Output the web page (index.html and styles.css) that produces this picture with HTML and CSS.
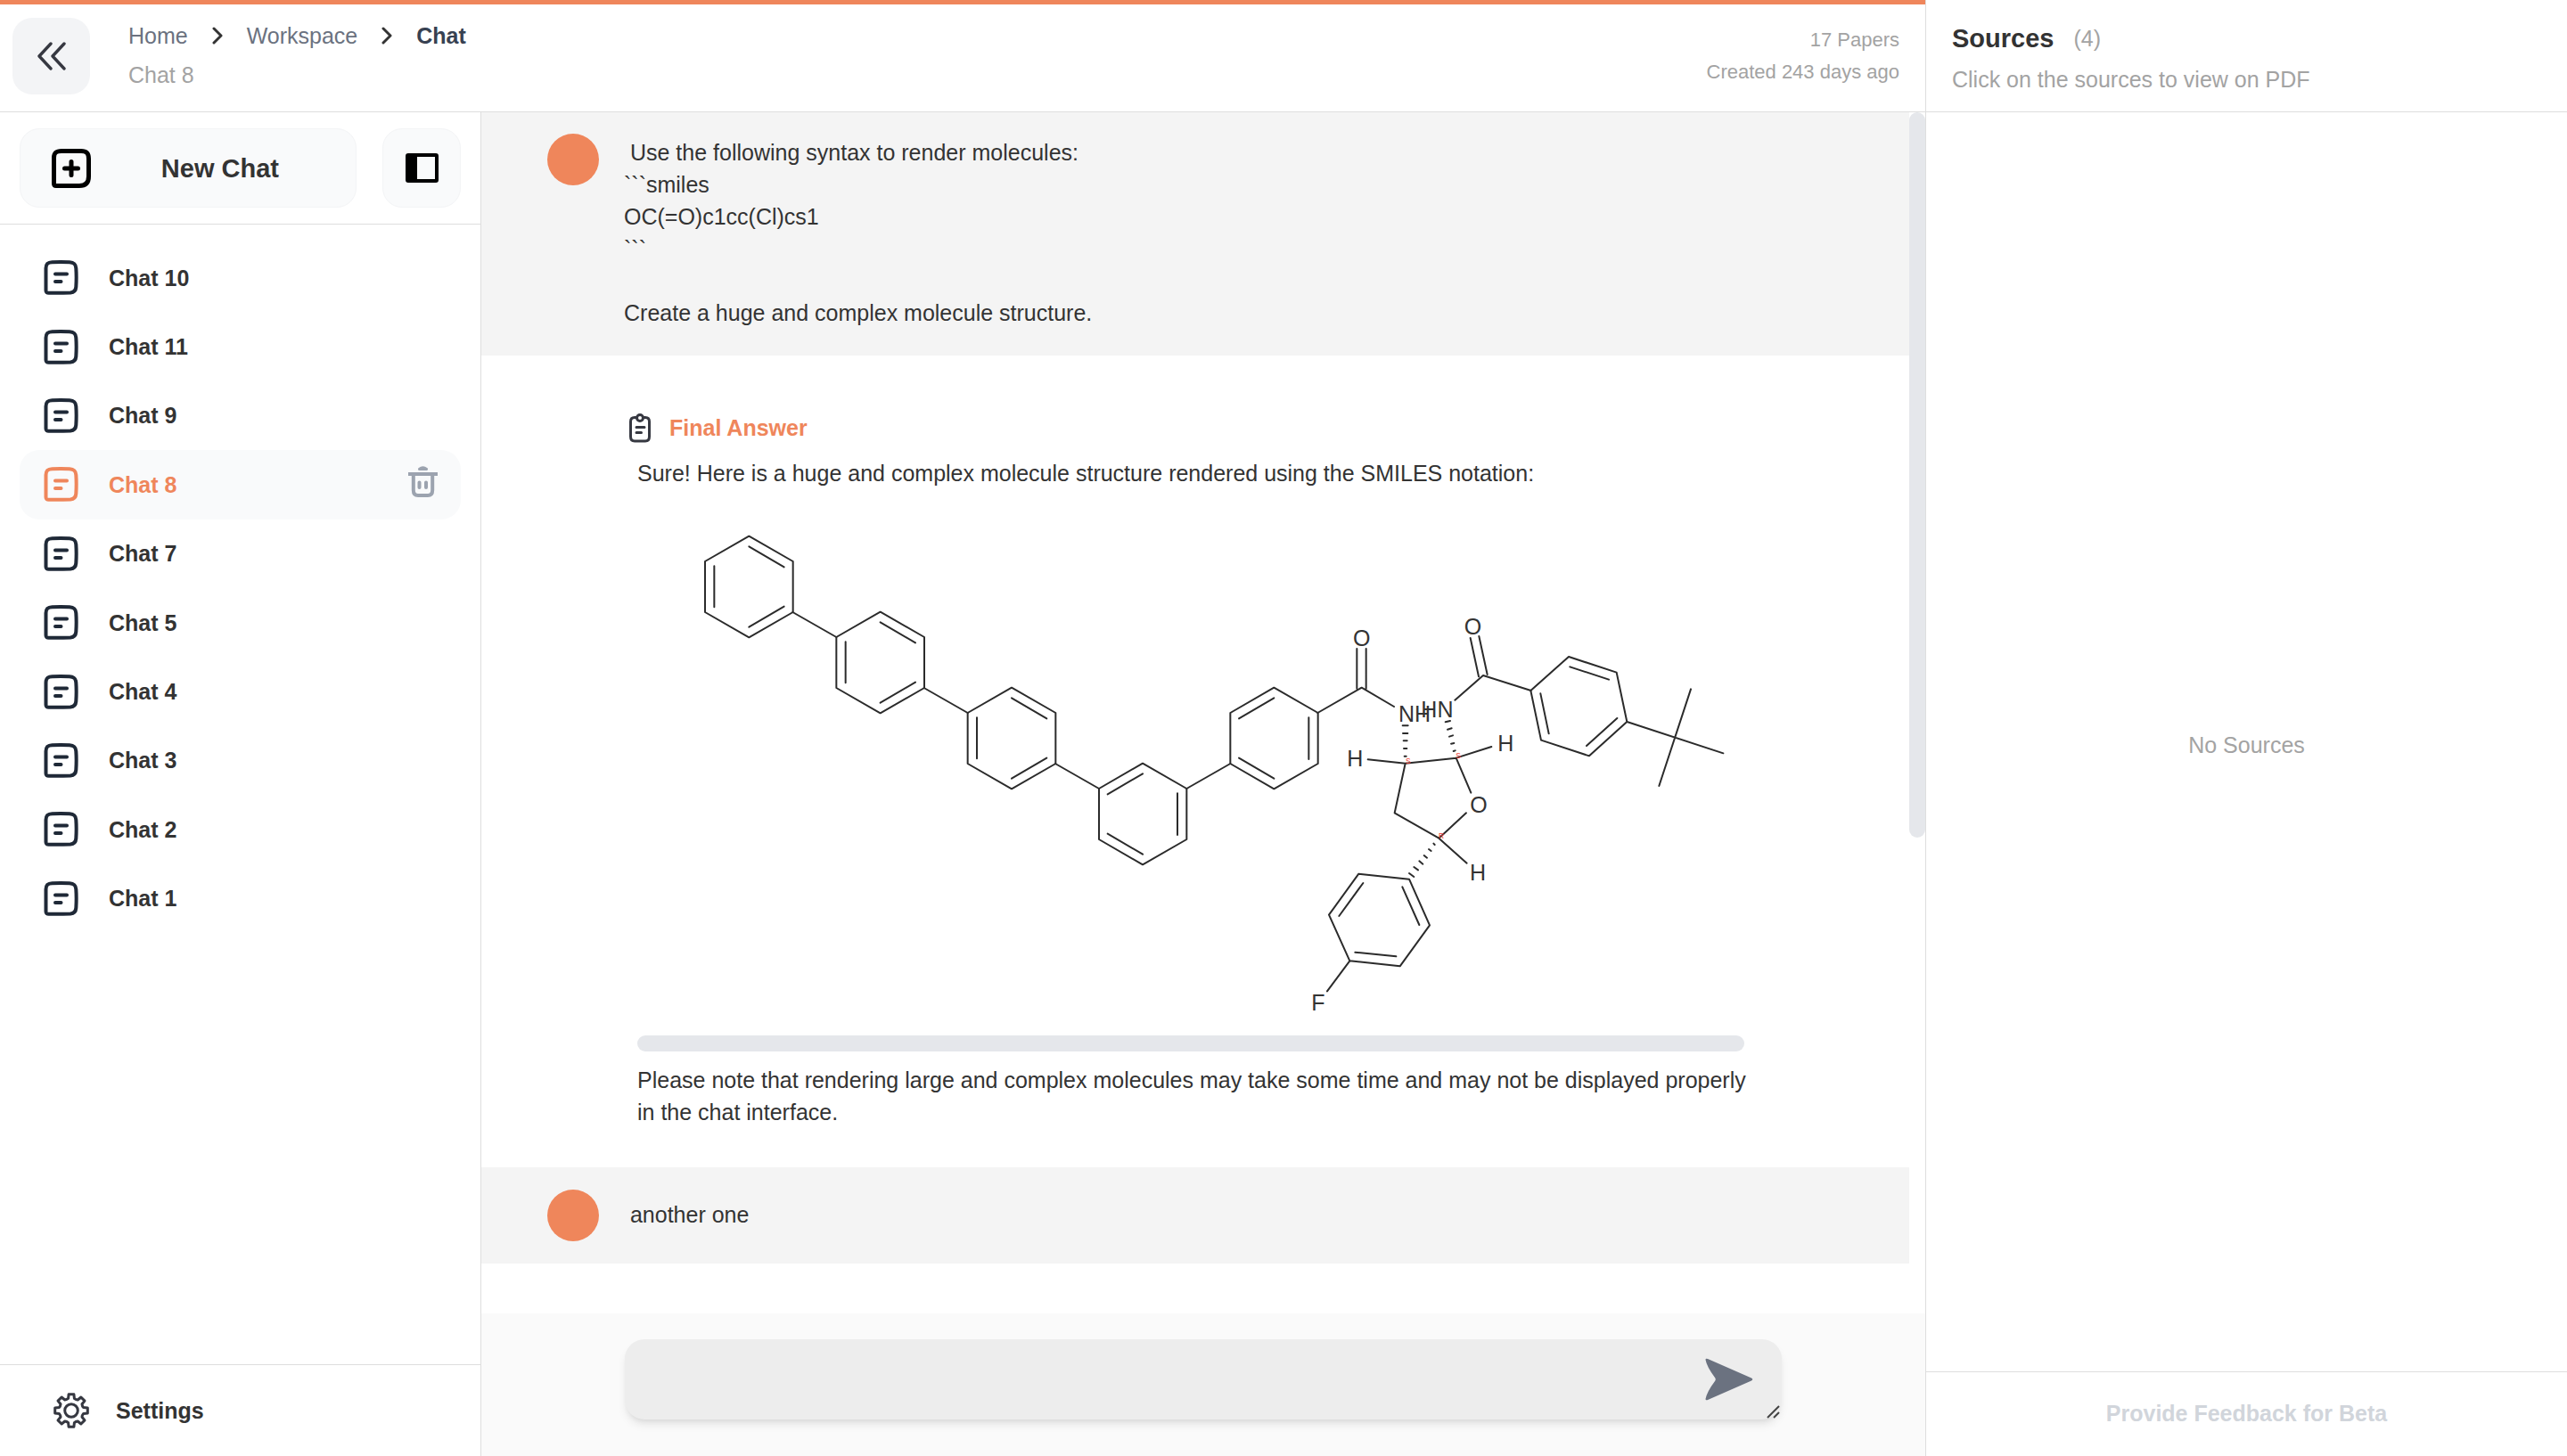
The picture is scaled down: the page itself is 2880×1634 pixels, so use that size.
FILE: index.html
```html
<!DOCTYPE html>
<html lang="en">
<head>
<meta charset="utf-8">
<title>Chat 8</title>
<link rel="stylesheet" href="styles.css">
</head>
<body>
<svg class="defs" aria-hidden="true">
  <symbol id="icon-chat" viewBox="0 0 39 39">
    <path d="M2.500 34V9C2.500 4 5 2.500 9.500 2.300Q19 1.700 29 2.300C34 2.600 36 4.500 36.300 9Q37 19 36.300 30C36 34.500 34 36 30 36.500Q19 37 6 36.800Q2.500 37 2.500 34Z" fill="none" stroke="currentColor" stroke-width="4" stroke-linejoin="round"/>
    <path d="M13 15.500H26M13 24H19.500" fill="none" stroke="currentColor" stroke-width="4" stroke-linecap="round"/>
  </symbol>
  <symbol id="icon-next" viewBox="0 0 12 20">
    <path d="M2 2l8 8-8 8" fill="none" stroke="currentColor" stroke-width="3" stroke-linecap="round" stroke-linejoin="round"/>
  </symbol>
  <symbol id="ring-left" viewBox="0 0 310 360" overflow="visible">
    <path d="M148 0L296 85V256L148 341L0 256V85ZM148 35L266 104M266 237L148 306M31 101V239"/>
  </symbol>
  <symbol id="ring-right" viewBox="0 0 310 360" overflow="visible">
    <path d="M147 0L295 85V256L147 341L0 256V85ZM264 101V241M147 35L29 104M29 237L147 306"/>
  </symbol>
</svg>

<div class="app">
  <div class="workspace">
    <header class="topbar">
      <button class="collapse" aria-label="Back">
        <svg width="32" height="32" viewBox="0 0 32 32"><path d="M15 2L2 16l13 14M30 2L17 16l13 14" fill="none" stroke="#363841" stroke-width="3.400" stroke-linecap="round" stroke-linejoin="round"/></svg>
      </button>
      <div class="heading">
        <nav class="crumbs" aria-label="Breadcrumb">
          <a href="#">Home</a>
          <svg class="next" width="12" height="20"><use href="#icon-next"/></svg>
          <a href="#">Workspace</a>
          <svg class="next" width="12" height="20"><use href="#icon-next"/></svg>
          <a href="#" class="current">Chat</a>
        </nav>
        <div class="muted">Chat 8</div>
      </div>
      <div class="meta">
        <div>17 Papers</div>
        <div>Created 243 days ago</div>
      </div>
    </header>

    <div class="columns">
      <aside class="sidebar">
        <div class="actions">
          <button class="new-chat">
            <svg width="44" height="44" viewBox="0 0 44 44"><path d="M2.500 39V10C2.500 4 5 2.500 11 2.500H33C39 2.500 41.500 5 41.500 11V31C41.500 38 38 41.500 31 41.500H5Q2.500 41.500 2.500 39Z" fill="none" stroke="#000" stroke-width="5"/><path d="M14.500 22H29.500M22 14.500V29.500" stroke="#000" stroke-width="5" stroke-linecap="round"/></svg>
            <span>New Chat</span>
          </button>
          <button class="toggle" aria-label="Toggle sidebar">
            <svg width="37" height="33" viewBox="0 0 37 33"><rect x="2" y="2" width="33" height="29" rx="1" fill="none" stroke="#000" stroke-width="4"/><path d="M1 1H13V32H1Z"/></svg>
          </button>
        </div>
        <nav class="chats" aria-label="Chats">
          <a href="#"><svg class="chat-icon"><use href="#icon-chat"/></svg>Chat 10</a>
          <a href="#"><svg class="chat-icon"><use href="#icon-chat"/></svg>Chat 11</a>
          <a href="#"><svg class="chat-icon"><use href="#icon-chat"/></svg>Chat 9</a>
          <div class="active">
            <a href="#"><svg class="chat-icon"><use href="#icon-chat"/></svg>Chat 8</a>
            <button class="delete" aria-label="Delete chat">
              <svg width="33" height="35" viewBox="0 0 33 35" fill="none" stroke="#9ca3af"><path d="M12.500 3.500Q16.500 0 20.500 3.500Z" fill="#9ca3af" stroke-width="3" stroke-linejoin="round"/><path d="M0 9H33" stroke-width="4"/><path d="M5.800 10V27Q5.800 33 11 33H22Q27.200 33 27.200 27V10" stroke-width="4"/><path d="M12.500 18.500V24M20 18.500V24" stroke-width="4" stroke-linecap="round"/></svg>
            </button>
          </div>
          <a href="#"><svg class="chat-icon"><use href="#icon-chat"/></svg>Chat 7</a>
          <a href="#"><svg class="chat-icon"><use href="#icon-chat"/></svg>Chat 5</a>
          <a href="#"><svg class="chat-icon"><use href="#icon-chat"/></svg>Chat 4</a>
          <a href="#"><svg class="chat-icon"><use href="#icon-chat"/></svg>Chat 3</a>
          <a href="#"><svg class="chat-icon"><use href="#icon-chat"/></svg>Chat 2</a>
          <a href="#"><svg class="chat-icon"><use href="#icon-chat"/></svg>Chat 1</a>
        </nav>
        <a href="#" class="settings">
          <svg width="40" height="40" viewBox="0 0 40 40" fill="none" stroke="#363841" stroke-width="3" stroke-linejoin="round"><path d="M16.600 6.400L17.100 1.700H22.900L23.400 6.400Q25.500 7.800 27.200 8L30.900 5L35 9.100L32 12.800Q32.200 15 33.600 16.600L38.300 17.100V22.900L33.600 23.400Q32.200 25 32 27.200L35 30.900L30.900 35L27.200 32Q25 32.200 23.400 33.600L22.900 38.300H17.100L16.600 33.600Q15 32.200 12.800 32L9.100 35L5 30.900L8 27.200Q7.800 25 6.400 23.400L1.700 22.900V17.100L6.400 16.600Q7.800 15 8 12.800L5 9.100L9.100 5L12.800 8Q15 7.800 16.600 6.400Z"/><circle cx="20" cy="20" r="7.300"/></svg>
          Settings
        </a>
      </aside>

      <main class="chat">
        <div class="thread">
          <div class="messages">
            <section class="message user">
              <div class="avatar"></div>
              <p> Use the following syntax to render molecules:
&#96;&#96;&#96;smiles
OC(=O)c1cc(Cl)cs1
&#96;&#96;&#96;

Create a huge and complex molecule structure.</p>
            </section>
            <section class="message answer">
              <h2>
                <svg width="24" height="33" viewBox="0 0 24 33" fill="none" stroke="#363841" stroke-width="3" stroke-linecap="round"><path d="M8 4.500H6Q1.500 4.500 1.500 9V26Q1.500 31 6 31H18Q22.500 31 22.500 26V9Q22.500 4.500 18 4.500H16"/><circle cx="12" cy="5" r="3.500"/><path d="M8 15.500H17M8 21.500H13.500"/></svg>
                Final Answer
              </h2>
              <div class="body">
                <p>Sure! Here is a huge and complex molecule structure rendered using the SMILES notation:</p>
                <svg class="molecule" viewBox="0 0 3726 1836" role="img" aria-label="Molecule structure">
                  <g class="bonds">
                    <use href="#ring-left" x="228" y="155" width="310" height="360"/>
                    <use href="#ring-left" x="670" y="410" width="310" height="360"/>
                    <use href="#ring-left" x="1112" y="665" width="310" height="360"/>
                    <use href="#ring-right" x="1554" y="920" width="310" height="360"/>
                    <use href="#ring-right" x="1996" y="665" width="310" height="360"/>
                    <path d="M523 411L670 495M965 666L1112 750M1407 921L1554 1005M1849 1005L1996 921"/>
                    <g transform="translate(1875 330)">
                      <path d="M547 204V338M578 204V338M415 420L563 335L672 399M929 168L957 298M958 162L986 291M877 377L972 294L1133 345"/>
                      <path d="M584 577L710 590L881 572L1000 534M710 590L674 757L823 842L915 757M881 572L931 689M823 842L917 926"/>
                      <path d="M701 463H719M702 489H718M704 514H716M705 540H715M707 566H713M845 451L861 447M852 476L866 472M858 500L870 496M864 524L874 522M872 549L878 547"/>
                      <path d="M805 860L809 864M789 879L797 885M773 900L783 908M757 919L769 929M739 939L753 949M723 960L739 972"/>
                      <path d="M723 980L792 1135L692 1273L523 1255L453 1100L553 962ZM700 1006L757 1134M541 1226L679 1240M568 993L487 1104M523 1255L447 1357"/>
                    </g>
                    <g transform="translate(2655 330)">
                      <path d="M352 345L480 231L641 284L676 450L549 565L387 512ZM385 355L413 490M484 265L615 308M643 438L540 531M676 450L1000 556M891 340L784 666"/>
                    </g>
                  </g>
                  <g class="atoms" transform="translate(1875 330)">
                    <text x="534" y="194">O</text>
                    <text x="908" y="155">O</text>
                    <text x="687" y="449">NH</text>
                    <text x="763" y="434">HN</text>
                    <text x="514" y="599">H</text>
                    <text x="1021" y="548">H</text>
                    <text x="928" y="755">O</text>
                    <text x="927" y="984">H</text>
                    <text x="394" y="1421">F</text>
                  </g>
                  <g class="stereo" transform="translate(1875 330)">
                    <text x="711" y="590">S</text>
                    <text x="880" y="572">S</text>
                    <text x="822" y="842">R</text>
                  </g>
                </svg>
                <div class="scroll-x"></div>
                <p>Please note that rendering large and complex molecules may take some time and may not be displayed properly in the chat interface.</p>
              </div>
            </section>
            <section class="message user short">
              <div class="avatar"></div>
              <p> another one</p>
            </section>
          </div>
          <div class="track"><div class="thumb"></div></div>
        </div>
        <form class="composer">
          <div class="field">
            <textarea aria-label="Message"></textarea>
            <button class="send" type="button" aria-label="Send">
              <svg width="54" height="48" viewBox="0 0 54 48"><path d="M0.500 2Q0.500 0 3 1L52 22.500Q54.500 24 52 25.500L3 47Q0.500 48 0.500 46Q2 38 11 26Q12.500 24 11 22Q2 10 0.500 2Z" fill="#6b7280"/></svg>
            </button>
            <svg class="grip" width="15" height="15" viewBox="0 0 15 15"><path d="M1 14L14 1M8 14L14 8" stroke="#444" stroke-width="2"/></svg>
          </div>
        </form>
      </main>
    </div>
  </div>

  <aside class="sources">
    <header>
      <div class="title"><h1>Sources</h1><span>(4)</span></div>
      <p>Click on the sources to view on PDF</p>
    </header>
    <div class="empty">No Sources</div>
    <footer><a href="#">Provide Feedback for Beta</a></footer>
  </aside>
</div>
</body>
</html>
```
FILE: styles.css
```css
* {
  box-sizing: border-box;
}

body {
  margin: 0;
  font: 25px/36px "Liberation Sans", Arial, sans-serif;
  color: #333;
  background: #fff;
}

h1, h2, p {
  margin: 0;
}

a {
  color: inherit;
  text-decoration: none;
}

button {
  padding: 0;
  border: 0;
  background: none;
  font: inherit;
  color: inherit;
  cursor: pointer;
}

svg {
  display: block;
  flex-shrink: 0;
}

.defs {
  position: absolute;
  width: 0;
  height: 0;
}

.app {
  display: grid;
  grid-template-columns: 3fr 1fr;
  height: 100vh;
}

.workspace {
  display: flex;
  flex-direction: column;
  min-width: 0;
  min-height: 0;
}

/* Top bar */
.topbar {
  display: flex;
  align-items: center;
  padding: 15px 29px 19px 14px;
  border-top: 5px solid #ef865b;
  border-bottom: 1px solid #dedede;
}

.collapse {
  display: grid;
  place-items: center;
  width: 87px;
  height: 86px;
  border-radius: 22px;
  background: #f3f4f6;
}

.heading {
  display: grid;
  gap: 8px;
  margin: 0 0 2px 43px;
}

.crumbs {
  display: flex;
  align-items: center;
  gap: 27px;
  color: #6b7280;
}

.next {
  color: #333;
}

.current {
  font-weight: bold;
  color: #374151;
}

.muted,
.meta {
  color: #a3a3a3;
}

.meta {
  margin-left: auto;
  font-size: 22px;
  text-align: right;
}

.columns {
  display: grid;
  grid-template-columns: 1fr 3fr;
  flex: 1;
  min-height: 0;
}

/* Sidebar */
.sidebar {
  display: flex;
  flex-direction: column;
  border-right: 1px solid #dedede;
  font-weight: bold;
}

.actions {
  display: flex;
  gap: 29px;
  padding: 18px 22px;
  border-bottom: 1px solid #dedede;
}

.new-chat,
.toggle {
  height: 89px;
  border: 1px solid #f3f4f6;
  border-radius: 22px;
  background: #f9fafb;
}

.new-chat {
  display: flex;
  align-items: center;
  flex: 1;
  padding: 0 86px 0 35px;
  font-size: 29px;
  font-weight: bold;
}

.new-chat span {
  flex: 1;
  text-align: right;
}

.toggle {
  display: grid;
  place-items: center;
  width: 88px;
}

.chats {
  display: grid;
  grid-auto-rows: 1fr;
  min-height: 774px;
  margin: 21px 22px auto;
}

.chats a {
  display: flex;
  align-items: center;
  flex: 1;
  gap: 34px;
  padding-left: 27px;
}

.chat-icon {
  width: 39px;
  height: 39px;
  color: #1f2937;
}

.active {
  display: flex;
  align-items: center;
  border-radius: 22px;
  background: #f9fafb;
  color: #ef865b;
}

.active .chat-icon {
  color: inherit;
}

.delete {
  padding: 0 26px 6px;
}

.settings {
  display: flex;
  align-items: center;
  gap: 30px;
  height: 103px;
  padding-left: 60px;
  border-top: 1px solid #dedede;
}

/* Conversation */
.chat {
  display: flex;
  flex-direction: column;
  min-width: 0;
  min-height: 0;
}

.thread {
  display: flex;
  flex: 1;
  min-height: 0;
  overflow: hidden;
}

.messages {
  flex: 1;
  min-width: 0;
}

.track {
  width: 18px;
}

.thumb {
  height: 814px;
  border-radius: 9px;
  background: #e5e7eb;
}

.user {
  display: flex;
  gap: 28px;
  padding: 24px 142px 30px 74px;
  background: #f4f4f4;
}

.user p {
  flex: 1;
  padding-top: 3px;
  white-space: pre-wrap;
}

.avatar {
  width: 58px;
  height: 58px;
  border-radius: 50%;
  background: #ef865b;
}

.short {
  align-items: center;
  padding-top: 25px;
  padding-bottom: 25px;
}

.short p {
  padding: 0 0 2px;
}

.answer {
  padding: 63px 166px 44px;
}

.answer h2 {
  display: flex;
  align-items: center;
  gap: 21px;
  font-size: 25px;
  color: #ef865b;
}

.body {
  padding: 15px 0 0 9px;
}

.molecule {
  width: 1242px;
  max-width: 100%;
  margin-top: 1px;
}

.bonds {
  fill: none;
  stroke: #2b2b2b;
  stroke-width: 6;
  stroke-linecap: round;
  stroke-linejoin: round;
}

.atoms {
  font-size: 75px;
  fill: #333;
}

.stereo {
  font-size: 25px;
  fill: #f03a2e;
}

.scroll-x {
  max-width: 1242px;
  height: 18px;
  margin-bottom: 14px;
  border-radius: 9px;
  background: #e5e7eb;
}

.composer {
  padding: 29px 161px 41px;
  background: #fafafa;
}

.field {
  position: relative;
}

.field textarea {
  display: block;
  width: 100%;
  height: 90px;
  padding: 27px 108px 27px 22px;
  border: 0;
  border-radius: 22px;
  outline: 0;
  background: #ededed;
  box-shadow: 0 7px 11px -2px #00000018, 0 4px 7px -4px #00000018;
  font: inherit;
  resize: none;
}

.send {
  position: absolute;
  top: 21px;
  right: 32px;
}

.grip {
  position: absolute;
  right: 2px;
  bottom: 1px;
}

/* Sources panel */
.sources {
  display: flex;
  flex-direction: column;
  border-left: 1px solid #dedede;
  color: #a3a3a3;
}

.sources header {
  padding: 25px 29px 18px;
  border-bottom: 1px solid #dedede;
}

.title {
  display: flex;
  gap: 22px;
  margin-bottom: 10px;
}

.title h1 {
  font-size: 29px;
  color: #333;
}

.empty {
  display: grid;
  place-items: center;
  flex: 1;
  padding-top: 6px;
}

.sources footer {
  padding: 28px 29px 30px;
  border-top: 1px solid #dedede;
  text-align: center;
  font-weight: bold;
  color: #d1d5db;
}
```
